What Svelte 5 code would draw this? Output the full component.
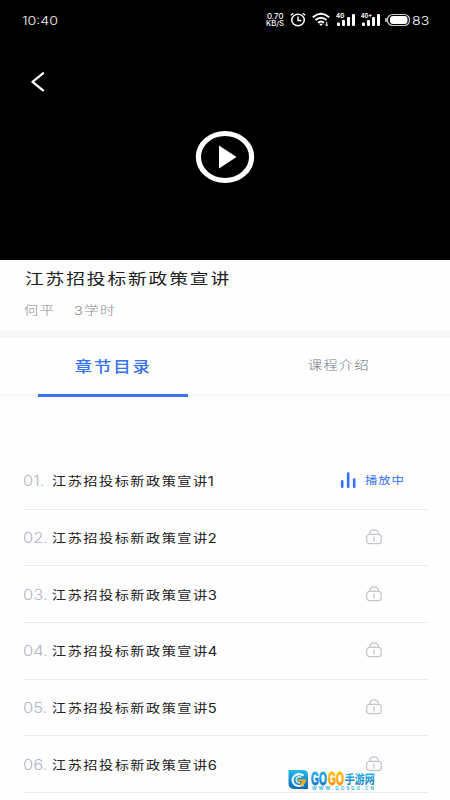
<script>
  const lessons = [1, 2, 3, 4, 5, 6];
</script>

{#snippet lock()}
  <svg class="lock" width="16" height="16" viewBox="0 0 16 16" fill="none" stroke="#c3c5ce" stroke-width="1.2">
    <rect x=".7" y="5.3" width="14.6" height="9.4" rx="3" />
    <path d="M3.5 5.2C3.7 2.4 5.4.9 8 .9s4.300 1.500 4.500 4.300M8 7.500v5" />
  </svg>
{/snippet}

{#snippet signal(label)}
  <svg class="signal" width="20" height="16" viewBox="0 0 20 16" fill="#fff">
    <text x="0" y="5.800" font-size="6.500" font-weight="700" textLength={label.length > 2 ? 11 : 8.500} lengthAdjust="spacingAndGlyphs">{label}</text>
    <rect x="1" y="10.500" width="3" height="3.500" rx="1" />
    <rect x="6" y="8" width="3" height="6" rx="1" />
    <rect x="11" y="5" width="3" height="9" rx="1" />
    <rect x="16" y="2" width="3" height="12" rx="1" />
  </svg>
{/snippet}

<main>
  <section class="video">
    <div class="status">
      <span class="clock"><span class="wide">10:40</span></span>
      <div class="indicators">
        <svg width="20" height="16" viewBox="0 0 20 16" fill="#fff" font-size="7" font-weight="500">
          <text x="2" y="7" textLength="16.500" lengthAdjust="spacingAndGlyphs">0.70</text>
          <text x="1" y="13.500" textLength="18" lengthAdjust="spacingAndGlyphs">KB/S</text>
        </svg>
        <svg class="alarm" width="16" height="16" viewBox="0 0 16 16" fill="none" stroke="#fff">
          <ellipse cx="8" cy="8" rx="6.300" ry="5.700" stroke-width="1.500" />
          <path d="M8 4.500V8.500h3.300M.8 3.300l2.500-2M15.200 3.300l-2.500-2" stroke-width="1.400" />
        </svg>
        <svg class="wifi" width="18" height="16" viewBox="0 0 18 16" fill="none" stroke="#fff" stroke-width="1.900">
          <path d="M.8 5.200Q9-1.600 17.200 5.200M3.400 8Q9 3.400 14.600 8M6 10.700Q9 8.200 12 10.700" />
          <path d="M7 11.800h4L9 14z" fill="#fff" stroke="none" />
          <path d="M14.700 9.800v4M13.300 12.500l1.400 1.400 1.400-1.400" stroke-width="1" />
        </svg>
        {@render signal('4G')}
        {@render signal('4G+')}
        <svg class="battery" width="25" height="14" viewBox="0 0 25 14">
          <rect x="2.500" y="1.500" width="22" height="11" rx="5" fill="none" stroke="#ccc" stroke-width="1.200" />
          <rect x="5" y="3" width="17.500" height="8" rx="3.200" fill="#fff" />
          <path d="M1 5v4" stroke="#ddd" stroke-width="1.500" />
        </svg>
        <span class="charge"><span class="wide">83</span></span>
      </div>
    </div>
    <svg class="back" width="14" height="20" viewBox="0 0 14 20" fill="none" stroke="#fff" stroke-width="2.300" stroke-linecap="round" stroke-linejoin="round">
      <path d="M12 1.300L1.500 9.900l10.500 8.500" />
    </svg>
    <svg class="play" width="60" height="54" viewBox="0 0 60 54">
      <ellipse cx="30" cy="27" rx="26.600" ry="23.500" fill="none" stroke="#fff" stroke-width="5.200" />
      <path d="M24 15.500L41.500 27 24 38.500z" fill="#fff" />
    </svg>
  </section>

  <section class="course">
    <h1>江苏招投标新政策宣讲</h1>
    <p><span>何平</span><span class="hours">3学时</span></p>
  </section>

  <nav>
    <div class="tab active"><span>章节目录</span></div>
    <div class="tab"><span>课程介绍</span></div>
  </nav>

  <div class="list">
    {#each lessons as n}
      <div class="row">
        <span class="number"><span>0{n}.</span></span>
        <span class="name"><span>江苏招投标新政策宣讲<b>{n}</b></span></span>
        {#if n === 1}
          <svg class="bars" width="16" height="17" viewBox="0 0 16 17" stroke="#3571f5" stroke-width="2.600" stroke-linecap="round">
            <path d="M2.200 9.300v5.500M8.200 1.500v13.300M14.200 7.500v7.300" />
          </svg>
          <span class="playing"><span>播放中</span></span>
        {:else}
          {@render lock()}
        {/if}
      </div>
    {/each}
  </div>

  <svg class="watermark" width="92" height="24" viewBox="0 0 92 24">
    <defs>
      <linearGradient id="blue" x1="0" y1="0" x2="0" y2="1">
        <stop offset="0" stop-color="#25b9ef" />
        <stop offset="1" stop-color="#0868b8" />
      </linearGradient>
      <linearGradient id="orange" x1="0" y1="0" x2="0" y2="1">
        <stop offset="0" stop-color="#ffc400" />
        <stop offset="1" stop-color="#ff8a00" />
      </linearGradient>
    </defs>
    <path d="M.5 1H15q5 0 5 5v14H7q-6.500 0-6.500-6z" fill="url(#blue)" />
    <path d="M15.500 6.700A6.600 5.900 0 1 0 15.500 15.500" fill="none" stroke="#f2fcff" stroke-width="2.200" />
    <path d="M13.200 8.500A3.200 3 0 1 0 12 13.800" fill="none" stroke="#c8f1fd" stroke-width="1.500" />
    <path d="M9.500 10.200H18c0 4-3 6.800-6.500 6.800l2.500-4.500H9.500z" fill="#ffad19" />
    <g font-weight="700">
      <text class="brand" x="23" y="16.300" font-size="18" textLength="15.800" lengthAdjust="spacingAndGlyphs" fill="url(#blue)" stroke="url(#blue)" stroke-width=".8">GO</text>
      <text class="brand" x="40" y="16.300" font-size="18" textLength="15.800" lengthAdjust="spacingAndGlyphs" fill="url(#orange)" stroke="url(#orange)" stroke-width=".8">GO</text>
      <text x="56.700" y="14.800" font-size="12.500" textLength="30" lengthAdjust="spacingAndGlyphs" fill="url(#blue)">手游网</text>
      <text x="24" y="21.300" font-size="4.500" textLength="62" fill="#32b5e5">WWW.GO9GO.CN</text>
    </g>
  </svg>
</main>

<style>
  :global(body) { background: #fff; }
  main {
    position: relative;
    width: 450px;
    height: 800px;
    overflow: hidden;
    background: #fefefe;
    font-family: Inter, "Noto Sans CJK SC", sans-serif;
    color: #202020;
  }
  svg { display: block; flex: none; }
  h1, p { margin: 0; }
  .video {
    height: 260px;
    background: #000;
    color: #fff;
    display: flex;
    flex-direction: column;
  }
  .status {
    height: 40px;
    padding-left: 22px;
    display: flex;
    align-items: center;
    justify-content: space-between;
  }
  .wide { display: inline-block; transform: scaleX(1.18); transform-origin: left; }
  .clock { font-size: 12px; font-weight: 300; color: #f4f4f4; }
  .indicators { display: flex; align-items: center; width: 185px; }
  .alarm { margin-left: 5px; }
  .wifi { margin-left: 6px; }
  .signal { margin-left: 6px; }
  .signal + .signal { margin-left: 5px; }
  .battery { margin-left: 4px; }
  .charge { margin-left: 2px; font-size: 12px; font-weight: 300; }
  .back { margin: 32px 0 0 31px; }
  .play { margin: 38px 0 0 195px; }

  .course { height: 71px; display: flex; flex-direction: column; }
  h1 {
    padding: 7px 0 0 25px;
    width: 172px;
    font-size: 15px;
    line-height: 24px;
    font-weight: 400;
    letter-spacing: 1.480px;
    white-space: nowrap;
    transform: scaleX(1.250);
    transform-origin: 25px 0;
  }
  .course p {
    display: flex;
    padding: 10px 0 0 24px;
    font-size: 12px;
    line-height: 20px;
    color: #8c8c8c;
    font-weight: 300;
  }
  .course p span { width: 50px; transform: scaleX(1.220); transform-origin: left; letter-spacing: 1px; white-space: nowrap; }

  nav {
    display: flex;
    height: 59px;
    box-sizing: content-box;
    border-top: 7px solid #f6f6f6;
    background: linear-gradient(#f8f8f8, #f8f8f8) bottom / 100% 3px no-repeat;
  }
  .tab {
    width: 150px;
    margin: 0 37.500px;
    box-sizing: border-box;
    text-align: center;
    line-height: 56px;
    font-size: 12.500px;
    letter-spacing: .900px;
    font-weight: 300;
    color: #74777e;
  }
  .tab span { display: inline-block; transform: translateX(1px) scaleX(1.160); }
  .active {
    border-bottom: 3px solid #3b75f5;
    line-height: 57px;
    font-size: 15px;
    font-weight: 500;
    letter-spacing: 1.600px;
    color: #3571f5;
  }

  .list { padding: 56px 22px 0 24px; }
  .row {
    height: 56.700px;
    box-sizing: border-box;
    border-bottom: 1px solid #ebebed;
    display: flex;
    align-items: center;
  }
  .number { width: 28px; font-size: 14px; font-weight: 300; color: #b0b4c2; }
  .number span, .name span, .playing span { display: inline-block; transform: scaleX(1.180); transform-origin: left; white-space: nowrap; }
  .number span { transform: translateX(-1px) scaleX(1.180); }
  .name { width: 288px; font-size: 12px; letter-spacing: 1.280px; }
  .name b { font-weight: 400; font-size: 12.500px; letter-spacing: 0; margin-left: -.900px; }
  .lock { margin: -1px 0 0 25.500px; }
  .bars { margin: -1px 0 0 0; }
  .playing { margin: -2px 0 0 9px; font-size: 10.500px; letter-spacing: .700px; color: #3571f5; }
  .watermark { position: absolute; left: 288px; top: 769px; }
  .brand { font-family: "Liberation Sans", sans-serif; }
</style>
